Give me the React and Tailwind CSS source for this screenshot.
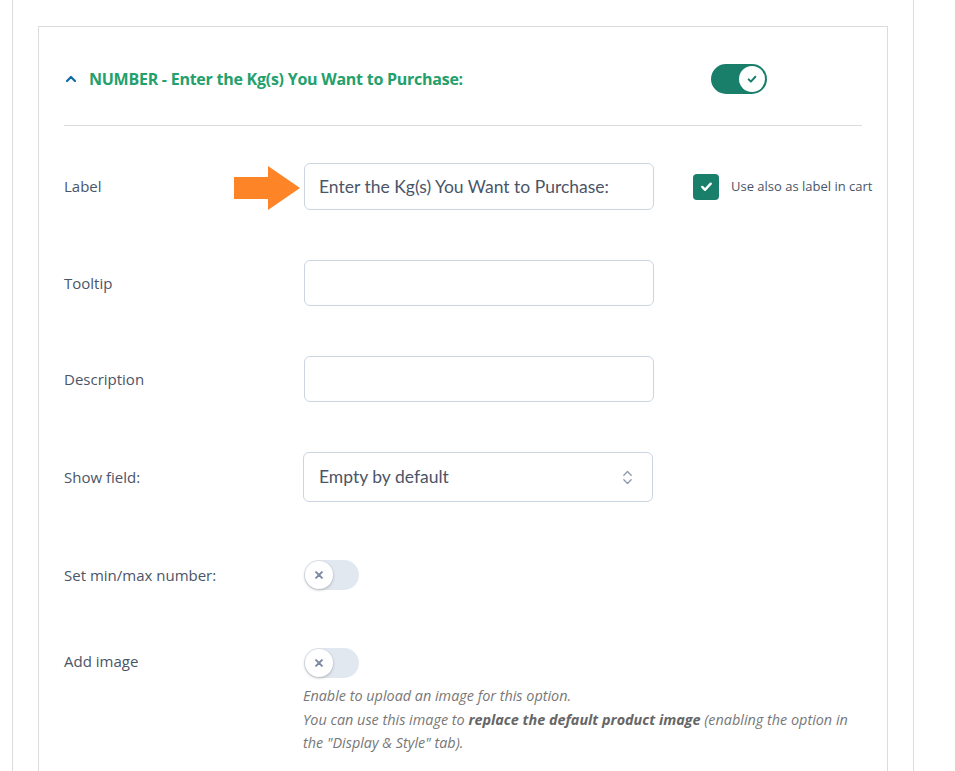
import React, { useState } from "react";

function CheckIcon({ className }) {
  return (
    <svg viewBox="0 0 16 16" className={className} fill="none" stroke="currentColor" strokeWidth="2.6" strokeLinecap="round" strokeLinejoin="round">
      <path d="M3.5 8.5l3 3 6-6.5" />
    </svg>
  );
}

function Toggle({ on, onChange }) {
  if (on) {
    return (
      <button
        onClick={onChange}
        className="relative w-[56px] h-[30px] rounded-full bg-[#1a7f6a] flex items-center justify-end pr-[2px]"
      >
        <span className="w-[26px] h-[26px] rounded-full bg-white flex items-center justify-center text-[#1a7f6a]">
          <CheckIcon className="w-[12px] h-[12px]" />
        </span>
      </button>
    );
  }
  return (
    <button
      onClick={onChange}
      className="relative w-[55px] h-[30px] rounded-full bg-[#e2e8f0] flex items-center pl-[1px]"
    >
      <span className="w-[28px] h-[28px] rounded-full bg-white shadow-[0_1px_3px_rgba(0,0,0,0.25)] flex items-center justify-center text-[#7d8aa3]">
        <svg viewBox="0 0 12 12" className="w-[10px] h-[10px]" stroke="currentColor" strokeWidth="2.4" strokeLinecap="round">
          <path d="M2.5 2.5l7 7M9.5 2.5l-7 7" />
        </svg>
      </span>
    </button>
  );
}

function Row({ label, children, className = "" }) {
  return (
    <div className={`flex items-center ${className}`}>
      <div className="w-[240px] shrink-0 text-[15px] text-[#4a5568] font-['Open_Sans',sans-serif]">{label}</div>
      {children}
    </div>
  );
}

const inputCls =
  "w-[350px] shrink-0 rounded-[6px] border border-[#cbd5e1] bg-white px-[14px] text-[17.5px] text-[#4a5568] outline-none";

export default function App() {
  const [enabled, setEnabled] = useState(true);
  const [minMax, setMinMax] = useState(false);
  const [addImage, setAddImage] = useState(false);
  const [label, setLabel] = useState("Enter the Kg(s) You Want to Purchase:");
  const [inCart, setInCart] = useState(true);

  return (
    <div className="h-[771px] overflow-hidden bg-white pl-[12px] font-['Lato',sans-serif]">
      <div className="w-[902px] h-full border-x border-[#dcdcdc] pt-[26px] pl-[25px]">
        <div className="w-[850px] border border-[#dcdcdc] px-[25px] pb-[200px]">
          <div className="h-[99px] pt-[5px] flex items-center border-b border-[#dcdcdc]">
            <svg viewBox="0 0 12 12" className="w-[12px] h-[12px] text-[#0e6aa8] ml-[1px]" fill="none" stroke="currentColor" strokeWidth="2.2" strokeLinecap="round" strokeLinejoin="round">
              <path d="M2 8l4-4 4 4" />
            </svg>
            <div className="ml-[12px] flex-1 text-[16px] font-bold text-[#23a06b] font-['Open_Sans',sans-serif] tracking-[-0.25px]">
              NUMBER - Enter the Kg(s) You Want to Purchase:
            </div>
            <div className="mr-[95px]">
              <Toggle on={enabled} onChange={() => setEnabled(!enabled)} />
            </div>
          </div>

          <Row label="Label" className="mt-[37px]">
            <div className="relative shrink-0">
              <svg viewBox="0 0 66 44" className="absolute left-[-70px] top-[3px] w-[66px] h-[44px]">
                <path d="M0 11h34V0l32 22-32 22V33H0z" fill="#fd8427" />
              </svg>
              <input
                value={label}
                onChange={(e) => setLabel(e.target.value)}
                className={`${inputCls} h-[47px]`}
              />
            </div>
            <label className="ml-[39px] flex items-center cursor-pointer whitespace-nowrap" onClick={() => setInCart(!inCart)}>
              <span className={`w-[26px] h-[26px] shrink-0 rounded-[4px] flex items-center justify-center text-white ${inCart ? "bg-[#1a7f6a]" : "border border-[#cbd5e1] bg-white"}`}>
                {inCart && <CheckIcon className="w-[15px] h-[15px]" />}
              </span>
              <span className="ml-[12px] text-[13px] text-[#4a5568] font-['Open_Sans',sans-serif]">Use also as label in cart</span>
            </label>
          </Row>

          <Row label="Tooltip" className="mt-[50px]">
            <input className={`${inputCls} h-[46px]`} />
          </Row>

          <Row label="Description" className="mt-[50px]">
            <input className={`${inputCls} h-[46px]`} />
          </Row>

          <Row label="Show field:" className="mt-[50px]">
            <div className="w-[350px] h-[50px] ml-[-1px] rounded-[6px] border border-[#cbd5e1] bg-white flex items-center px-[15px] text-[17.5px] text-[#4a5568]">
              <span className="flex-1">Empty by default</span>
              <svg viewBox="0 0 12 18" className="w-[11px] h-[17px] text-[#8a97ad] mr-[4px]" fill="none" stroke="currentColor" strokeWidth="1.4" strokeLinecap="round" strokeLinejoin="round">
                <path d="M2 6.5l4-4 4 4M2 11.5l4 4 4-4" />
              </svg>
            </div>
          </Row>

          <Row label="Set min/max number:" className="mt-[58px]">
            <Toggle on={minMax} onChange={() => setMinMax(!minMax)} />
          </Row>

          <div className="mt-[58px] flex">
            <div className="w-[240px] shrink-0 text-[15px] text-[#4a5568] pt-[2px] font-['Open_Sans',sans-serif]">Add image</div>
            <div>
              <Toggle on={addImage} onChange={() => setAddImage(!addImage)} />
              <p className="mt-[6px] ml-[-1px] text-[14.4px] leading-[23.5px] italic text-[#777] font-['Open_Sans',sans-serif]">
                Enable to upload an image for this option.
                <br />
                You can use this image to <b className="font-bold text-[#666]">replace the default product image</b> (enabling the option in
                <br />
                the "Display &amp; Style" tab).
              </p>
            </div>
          </div>
        </div>
      </div>
    </div>
  );
}
